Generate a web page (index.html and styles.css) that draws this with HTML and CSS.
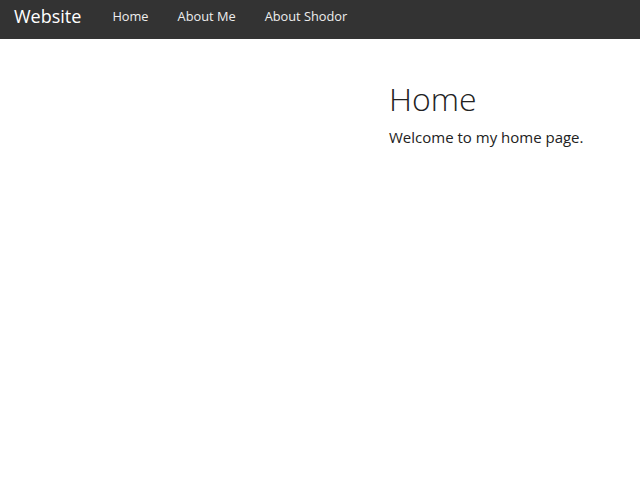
FILE: index.html
```html
<!DOCTYPE html>
<html lang="en">
<head>
    <meta charset="UTF-8">
    <meta name="viewport" content="width=device-width, initial-scale=1.0">
    <title>Website</title>
    <link rel="stylesheet" href="styles.css">
</head>
<body>
    <nav class="navbar">
        <a class="brand" href="#">Website</a>
        <ul class="nav-links">
            <li><a href="#">Home</a></li>
            <li><a href="#">About Me</a></li>
            <li><a href="#">About Shodor</a></li>
        </ul>
    </nav>
    <div class="page">
        <div class="sidebar"></div>
        <main class="content">
            <h1>Home</h1>
            <p>Welcome to my home page.</p>
        </main>
    </div>
</body>
</html>
```

FILE: styles.css
```css
body {
    font-family: "Open Sans", sans-serif;
    margin: 0;
    padding: 0;
    background-color: #fff;
    color: #222;
}
.navbar {
    display: flex;
    align-items: flex-start;
    box-sizing: border-box;
    height: 39px;
    background-color: #333;
    padding: 0 14px;
}
.brand {
    color: #fff;
    font-size: 18px;
    margin-top: 4px;
    text-decoration: none;
}
.nav-links {
    display: flex;
    gap: 29px;
    list-style: none;
    margin: 7px 0 0;
    padding: 0 0 0 31px;
    font-size: 12.8px;
}
.nav-links a {
    color: #eee;
    text-decoration: none;
}
.page {
    display: grid;
    grid-template-columns: 389px 1fr;
}
.content h1 {
    font-size: 32px;
    font-weight: 300;
    line-height: 1.1;
    margin: 42px 0 0;
}
.content p {
    font-size: 15px;
    margin: 11px 0 0;
}
```
